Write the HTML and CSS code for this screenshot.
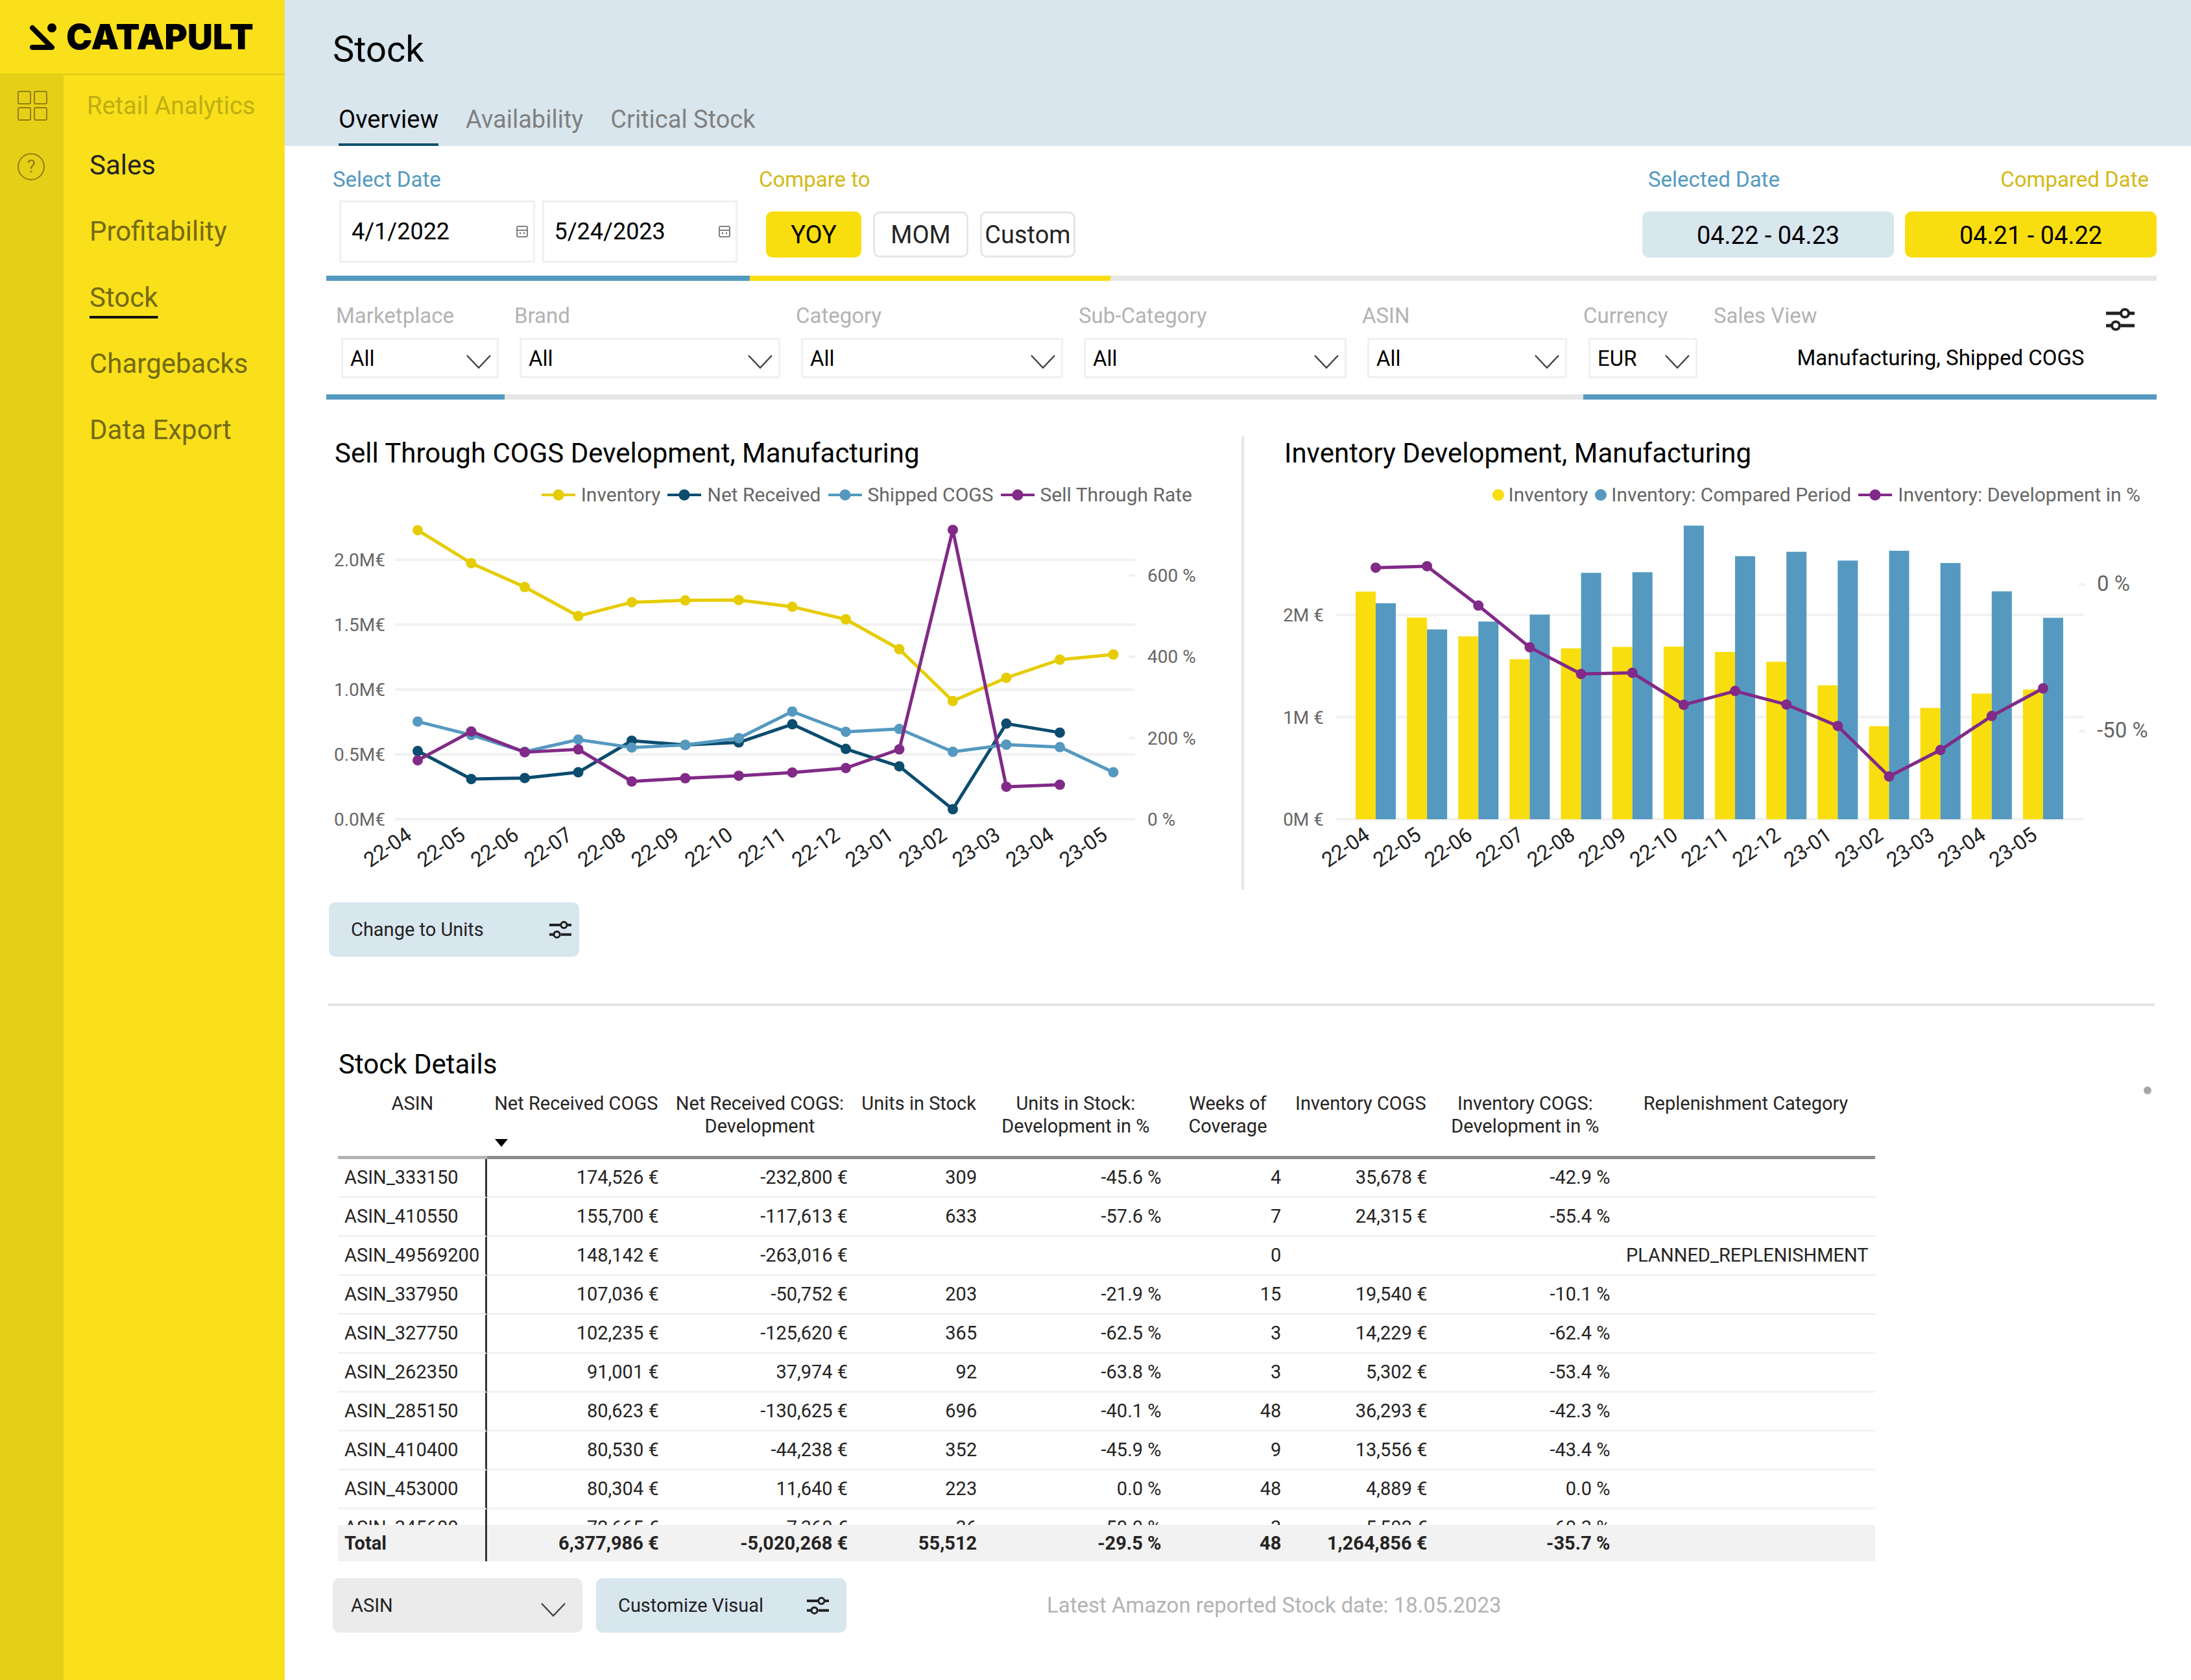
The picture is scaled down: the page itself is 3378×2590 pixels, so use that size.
FILE: index.html
```html
<!DOCTYPE html>
<html lang="en">
<head>
    <meta charset="UTF-8">
    <meta name="viewport" content="width=device-width, initial-scale=1.0">
    <title>Stock - Catapult</title>
    <link rel="stylesheet" href="styles.css">
</head>
<body>

    <svg width="0" height="0" class="sprite">
        <symbol id="sliders" viewBox="0 0 44 36">
            <path d="M0 9h22M36 9h8M0 28h8M23 28h21" stroke="currentColor" stroke-width="5" fill="none"/>
            <circle cx="29" cy="9" r="6" stroke="currentColor" stroke-width="4" fill="none"/>
            <circle cx="15" cy="28" r="6" stroke="currentColor" stroke-width="4" fill="none"/>
        </symbol>
        <symbol id="calendar" viewBox="0 0 18 18">
            <rect x="1" y="1" width="16" height="16" rx="2" stroke="currentColor" stroke-width="2" fill="none"/>
            <path d="M1 7h16M6 10v3M12 10v3" stroke="currentColor" stroke-width="2"/>
        </symbol>
    </svg>

    <aside class="sidebar">
        <div class="logo">
            <svg width="42" height="44" viewBox="0 0 42 44">
                <path d="M4 8L34 38H4" fill="none" stroke="#000" stroke-width="8" stroke-linecap="round" stroke-linejoin="round"/>
                <circle cx="34" cy="8" r="7" fill="#000"/>
            </svg>
            <span>CATAPULT</span>
        </div>
        <div class="sidebar-body">
            <div class="rail">
                <a href="#" aria-label="Apps">
                    <svg width="46" height="46" viewBox="0 0 46 46" fill="none" stroke="currentColor" stroke-width="2">
                        <rect x="1" y="1" width="19" height="19" rx="2"/>
                        <rect x="26" y="1" width="19" height="19" rx="2"/>
                        <rect x="1" y="26" width="19" height="19" rx="2"/>
                        <rect x="26" y="26" width="19" height="19" rx="2"/>
                    </svg>
                </a>
                <a href="#" class="help" aria-label="Help">?</a>
            </div>
            <nav class="nav">
                <p>Retail Analytics</p>
                <a href="#" class="dark">Sales</a>
                <a href="#">Profitability</a>
                <a href="#" class="current">Stock</a>
                <a href="#">Chargebacks</a>
                <a href="#">Data Export</a>
            </nav>
        </div>
    </aside>

    <main>
        <header class="page-header">
            <h1>Stock</h1>
            <nav class="tabs">
                <a href="#" class="active">Overview</a>
                <a href="#">Availability</a>
                <a href="#">Critical Stock</a>
            </nav>
        </header>

        <div class="content">
            <section class="dates">
                <div class="date-range">
                    <label for="from">Select Date</label>
                    <div class="date-inputs">
                        <div class="date-box">
                            <input type="text" id="from" value="4/1/2022">
                            <svg width="18" height="18"><use href="#calendar"/></svg>
                        </div>
                        <div class="date-box">
                            <input type="text" id="to" value="5/24/2023" aria-label="End date">
                            <svg width="18" height="18"><use href="#calendar"/></svg>
                        </div>
                    </div>
                </div>
                <div class="compare">
                    <span class="label">Compare to</span>
                    <div class="compare-buttons">
                        <button class="on">YOY</button>
                        <button>MOM</button>
                        <button>Custom</button>
                    </div>
                </div>
                <div class="periods">
                    <div class="period">
                        <span class="label">Selected Date</span>
                        <div class="pill">04.22 - 04.23</div>
                    </div>
                    <div class="period compared">
                        <span class="label">Compared Date</span>
                        <div class="pill">04.21 - 04.22</div>
                    </div>
                </div>
            </section>

            <section class="filters">
                <div class="filter blue">
                    <label for="marketplace">Marketplace</label>
                    <select id="marketplace"><option>All</option></select>
                </div>
                <div class="filter">
                    <label for="brand">Brand</label>
                    <select id="brand"><option>All</option></select>
                </div>
                <div class="filter">
                    <label for="category">Category</label>
                    <select id="category"><option>All</option></select>
                </div>
                <div class="filter">
                    <label for="subcategory">Sub-Category</label>
                    <select id="subcategory"><option>All</option></select>
                </div>
                <div class="filter wide-gap">
                    <label for="asin">ASIN</label>
                    <select id="asin"><option>All</option></select>
                </div>
                <div class="filter wide-gap flush blue">
                    <label for="currency">Currency</label>
                    <select id="currency"><option>EUR</option></select>
                </div>
                <div class="filter flush blue sales-view">
                    <div class="sales-view-head">
                        <span class="label">Sales View</span>
                        <button aria-label="Change sales view"><svg width="44" height="36"><use href="#sliders"/></svg></button>
                    </div>
                    <p>Manufacturing, Shipped COGS</p>
                </div>
            </section>

            <section class="charts">
                <div class="chart">
                    <h2>Sell Through COGS Development, Manufacturing</h2>
                    <ul class="legend">
                        <li><i class="line inv"></i>Inventory</li>
                        <li><i class="line net"></i>Net Received</li>
                        <li><i class="line ship"></i>Shipped COGS</li>
                        <li><i class="line rate"></i>Sell Through Rate</li>
                    </ul>
                    <svg id="sell-through" viewBox="0 0 1411 591"></svg>
                </div>
                <div class="chart inventory">
                    <h2>Inventory Development, Manufacturing</h2>
                    <ul class="legend">
                        <li><i class="dot yellow"></i>Inventory</li>
                        <li><i class="dot ship"></i>Inventory: Compared Period</li>
                        <li><i class="line rate"></i>Inventory: Development in %</li>
                    </ul>
                    <svg id="inventory-dev" viewBox="0 0 1394 591"></svg>
                </div>
            </section>

            <button class="action units">Change to Units <svg width="34" height="28"><use href="#sliders"/></svg></button>

            <hr>

            <section class="details">
                <h2>Stock Details</h2>
                <div class="details-row">
                    <div class="table-area">
                        <div class="table-scroll">
                            <table>
                                <colgroup>
                                    <col class="c-asin"><col class="c-net"><col class="c-netdev"><col class="c-units"><col class="c-unitsdev"><col class="c-weeks"><col class="c-inv"><col class="c-invdev"><col>
                                </colgroup>
                                <thead>
                                    <tr>
                                        <th>ASIN</th>
                                        <th class="sorted">Net Received COGS</th>
                                        <th>Net Received COGS: Development</th>
                                        <th>Units in Stock</th>
                                        <th>Units in Stock:<br>Development in %</th>
                                        <th>Weeks of Coverage</th>
                                        <th>Inventory COGS</th>
                                        <th>Inventory COGS:<br>Development in %</th>
                                        <th>Replenishment Category</th>
                                    </tr>
                                </thead>
                                <tbody>
                                    <tr><td>ASIN_333150</td><td>174,526 €</td><td>-232,800 €</td><td>309</td><td>-45.6 %</td><td>4</td><td>35,678 €</td><td>-42.9 %</td><td></td></tr>
                                    <tr><td>ASIN_410550</td><td>155,700 €</td><td>-117,613 €</td><td>633</td><td>-57.6 %</td><td>7</td><td>24,315 €</td><td>-55.4 %</td><td></td></tr>
                                    <tr><td>ASIN_49569200</td><td>148,142 €</td><td>-263,016 €</td><td></td><td></td><td>0</td><td></td><td></td><td>PLANNED_REPLENISHMENT</td></tr>
                                    <tr><td>ASIN_337950</td><td>107,036 €</td><td>-50,752 €</td><td>203</td><td>-21.9 %</td><td>15</td><td>19,540 €</td><td>-10.1 %</td><td></td></tr>
                                    <tr><td>ASIN_327750</td><td>102,235 €</td><td>-125,620 €</td><td>365</td><td>-62.5 %</td><td>3</td><td>14,229 €</td><td>-62.4 %</td><td></td></tr>
                                    <tr><td>ASIN_262350</td><td>91,001 €</td><td>37,974 €</td><td>92</td><td>-63.8 %</td><td>3</td><td>5,302 €</td><td>-53.4 %</td><td></td></tr>
                                    <tr><td>ASIN_285150</td><td>80,623 €</td><td>-130,625 €</td><td>696</td><td>-40.1 %</td><td>48</td><td>36,293 €</td><td>-42.3 %</td><td></td></tr>
                                    <tr><td>ASIN_410400</td><td>80,530 €</td><td>-44,238 €</td><td>352</td><td>-45.9 %</td><td>9</td><td>13,556 €</td><td>-43.4 %</td><td></td></tr>
                                    <tr><td>ASIN_453000</td><td>80,304 €</td><td>11,640 €</td><td>223</td><td>0.0 %</td><td>48</td><td>4,889 €</td><td>0.0 %</td><td></td></tr>
                                    <tr><td>ASIN_345600</td><td>72,665 €</td><td>7,360 €</td><td>36</td><td>-50.0 %</td><td>3</td><td>5,502 €</td><td>-60.3 %</td><td></td></tr>
                                </tbody>
                            </table>
                        </div>
                        <table class="totals">
                            <colgroup>
                                <col class="c-asin"><col class="c-net"><col class="c-netdev"><col class="c-units"><col class="c-unitsdev"><col class="c-weeks"><col class="c-inv"><col class="c-invdev"><col>
                            </colgroup>
                            <tr><td>Total</td><td>6,377,986 €</td><td>-5,020,268 €</td><td>55,512</td><td>-29.5 %</td><td>48</td><td>1,264,856 €</td><td>-35.7 %</td><td></td></tr>
                        </table>
                    </div>
                    <i class="more"></i>
                </div>
                <div class="details-footer">
                    <select class="group-by" aria-label="Group by"><option>ASIN</option></select>
                    <button class="action">Customize Visual <svg width="34" height="28"><use href="#sliders"/></svg></button>
                    <p>Latest Amazon reported Stock date: 18.05.2023</p>
                </div>
            </section>
        </div>
    </main>

    <script>
        const months = ["22-04", "22-05", "22-06", "22-07", "22-08", "22-09", "22-10", "22-11", "22-12", "23-01", "23-02", "23-03", "23-04", "23-05"];
        const inventory = [2.228, 1.974, 1.79, 1.566, 1.673, 1.687, 1.69, 1.638, 1.541, 1.311, 0.911, 1.09, 1.23, 1.27];
        const netReceived = [0.526, 0.31, 0.318, 0.362, 0.605, 0.573, 0.592, 0.732, 0.542, 0.408, 0.077, 0.737, 0.668];
        const shipped = [0.753, 0.649, 0.52, 0.614, 0.553, 0.573, 0.625, 0.83, 0.674, 0.696, 0.52, 0.575, 0.556, 0.362];
        const rate = [145, 216, 165, 172, 93, 101, 107, 115, 126, 172, 712, 80, 85];
        const compared = [2.114, 1.858, 1.935, 2.003, 2.412, 2.418, 2.874, 2.575, 2.618, 2.532, 2.628, 2.508, 2.231, 1.972];
        const development = [5.7, 6.2, -7.2, -21.4, -30.5, -30.1, -41, -36.3, -40.9, -48.2, -65.4, -56.4, -44.8, -35.4];

        const BASE = 482;

        function series(values, x, y, name) {
            const pts = values.map((v, i) => [x(i), y(v)]);
            return `<polyline class="s-${name}" points="${pts.join(" ")}"/>` +
                pts.map(p => `<circle class="d-${name}" cx="${p[0]}" cy="${p[1]}" r="8"/>`).join("");
        }

        function gridLine(x1, x2, y) {
            return `<line class="grid" x1="${x1}" x2="${x2}" y1="${y}" y2="${y}"/>`;
        }

        function axisText(x, y, text, cls) {
            return `<text class="axis ${cls}" x="${x}" y="${y + 10}">${text}</text>`;
        }

        function monthLabels(x) {
            return months.map((m, i) => `<text class="month" transform="translate(${x(i) - 7} 511) rotate(-35)">${m}</text>`).join("");
        }

        // sell through chart
        let x = i => 141 + i * 82.5;
        let y = v => BASE - v * 200;
        let yRate = v => BASE - v * 0.6265;
        let out = "";
        [0, 0.5, 1, 1.5, 2].forEach(v => out += gridLine(106, 1247, y(v)) + axisText(91, y(v), v.toFixed(1) + "M€", "left"));
        [0, 200, 400, 600].forEach(v => out += gridLine(1237, 1247, yRate(v)) + axisText(1266, yRate(v), v + " %", ""));
        out += monthLabels(x);
        out += series(inventory, x, y, "inv") + series(netReceived, x, y, "net") + series(shipped, x, y, "ship") + series(rate, x, yRate, "rate");
        document.getElementById("sell-through").innerHTML = out;

        // inventory chart
        x = i => 203 + i * 79.15;
        y = v => BASE - v * 157.5;
        let yDev = v => 120 - v * 4.527;
        out = "";
        [0, 1, 2].forEach(v => out += gridLine(141, 1295, y(v)) + axisText(123, y(v), v + "M €", "left"));
        [0, -50].forEach(v => out += gridLine(1287, 1297, yDev(v)) + axisText(1315, yDev(v), v + " %", "big"));
        out += monthLabels(x);
        months.forEach((m, i) => {
            out += `<rect class="bar-inv" x="${x(i) - 31}" y="${y(inventory[i])}" width="31" height="${BASE - y(inventory[i])}"/>`;
            out += `<rect class="bar-comp" x="${x(i)}" y="${y(compared[i])}" width="31" height="${BASE - y(compared[i])}"/>`;
        });
        out += series(development, x, yDev, "rate");
        document.getElementById("inventory-dev").innerHTML = out;
    </script>

</body>
</html>
```
FILE: styles.css
```css
* {
    box-sizing: border-box;
}
body {
    margin: 0;
    display: flex;
    min-height: 100vh;
    background-color: white;
    color: #000;
    font-family: Roboto, Arial, sans-serif;
    font-size: 33px;
    line-height: 40px;
}
h1, h2, p, ul {
    margin: 0;
    padding: 0;
    font-weight: 400;
}
a {
    color: inherit;
    text-decoration: none;
}
button, input, select {
    font-family: inherit;
    color: inherit;
    cursor: pointer;
}
.sprite {
    position: absolute;
}

/* sidebar */
.sidebar {
    width: 439px;
    flex-shrink: 0;
    display: flex;
    flex-direction: column;
    background-color: #f9e01b;
}
.logo {
    height: 116px;
    display: flex;
    align-items: center;
    gap: 14px;
    padding-left: 46px;
    border-bottom: 3px solid #e6cf17;
    font-family: Inter, sans-serif;
    font-size: 54px;
    font-weight: 900;
}
.sidebar-body {
    flex: 1;
    display: flex;
}
.rail {
    width: 98px;
    padding-top: 24px;
    padding-left: 27px;
    background-color: #e6cf17;
    color: #8f810f;
}
.rail a {
    display: block;
    height: 46px;
    margin-bottom: 50px;
}
.rail svg {
    display: block;
}
.rail .help {
    width: 42px;
    height: 42px;
    border: 2px solid #8f810f;
    border-radius: 50%;
    font-size: 28px;
    line-height: 38px;
    text-align: center;
}
.nav {
    display: flex;
    flex-direction: column;
    align-items: flex-start;
    gap: 52px;
    padding-top: 24px;
    padding-left: 40px;
    font-size: 42px;
    line-height: 50px;
    color: #746a10;
}
.nav p {
    margin-left: -4px;
    margin-bottom: -8px;
    font-size: 38px;
    line-height: 46px;
    color: #bfae12;
}
.nav .dark {
    color: #252423;
}
.nav .current {
    text-decoration: underline;
    text-decoration-color: #111;
    text-decoration-thickness: 4px;
    text-underline-offset: 14px;
}

/* header */
main {
    flex: 1;
    min-width: 0;
}
.page-header {
    height: 225px;
    display: flex;
    flex-direction: column;
    justify-content: space-between;
    padding-top: 44px;
    padding-left: 74px;
    background-color: #d9e6ee;
}
h1 {
    font-size: 56px;
    line-height: 64px;
}
.tabs {
    display: flex;
    gap: 42px;
    padding-left: 9px;
    font-size: 38px;
    line-height: 46px;
    color: #808080;
}
.tabs a {
    padding-bottom: 14px;
    border-bottom: 4px solid transparent;
}
.tabs .active {
    color: #000;
    border-color: #12506f;
}

.content {
    padding: 0 53px 40px 64px;
}
label, .label {
    display: block;
}

/* date row */
.dates {
    display: flex;
}
.date-range {
    width: 653px;
    padding: 32px 19px 20px 10px;
    border-bottom: 8px solid #5599c0;
}
.date-range label {
    color: #5599c0;
}
.date-inputs {
    display: flex;
    gap: 11px;
    margin-top: 12px;
    padding-left: 10px;
}
.date-box {
    flex: 1;
    min-width: 0;
    display: flex;
    align-items: center;
    height: 96px;
    padding-right: 8px;
    border: 3px solid #f0f0f0;
    color: #808080;
}
.date-box input {
    flex: 1;
    min-width: 0;
    height: 66px;
    padding: 0 0 0 16px;
    border: none;
    font-size: 36px;
    color: #000;
}
.date-box svg {
    flex-shrink: 0;
}
.compare {
    width: 556px;
    padding: 32px 0 0 14px;
    border-bottom: 8px solid #f9de0f;
}
.compare .label, .compared .label {
    color: #d4b915;
}
.compare-buttons {
    display: flex;
    gap: 18px;
    margin-top: 29px;
    padding-left: 11px;
}
.compare-buttons button {
    width: 147px;
    height: 71px;
    padding: 0;
    background-color: white;
    border: 3px solid #e6e6e6;
    border-radius: 10px;
    font-size: 38px;
    color: #252423;
}
.compare-buttons .on {
    background-color: #f9de0f;
    border-color: #f9de0f;
    color: #000;
}
.periods {
    flex: 1;
    display: flex;
    justify-content: flex-end;
    gap: 17px;
    padding-top: 32px;
    border-bottom: 8px solid #e6e6e6;
}
.period {
    width: 388px;
}
.period .label {
    padding: 0 12px 0 9px;
    color: #5599c0;
}
.compared .label {
    text-align: right;
    color: #d4b915;
}
.pill {
    height: 71px;
    margin-top: 29px;
    border-radius: 10px;
    background-color: #d8e6ee;
    font-size: 38px;
    line-height: 74px;
    text-align: center;
}
.compared .pill {
    background-color: #f9de0f;
}

/* filter row */
.filters {
    display: grid;
    grid-template-columns: 275fr 434fr 436fr 437fr 356fr 201fr 683fr;
}
.filter {
    padding: 34px 9px 25px 15px;
    border-bottom: 8px solid #e6e6e6;
    color: #b3b3b3;
}
.filter.blue {
    border-color: #5599c0;
}
.filter.wide-gap {
    padding-right: 25px;
}
.filter.flush {
    padding-left: 0;
}
select {
    appearance: none;
    border: none;
    background: white url("data:image/svg+xml,%3Csvg xmlns='http://www.w3.org/2000/svg' width='38' height='22'%3E%3Cpath d='M1 1l18 19L37 1' fill='none' stroke='%23444' stroke-width='2.5'/%3E%3C/svg%3E") no-repeat right 9px top 23px;
}
.filter select {
    display: block;
    width: calc(100% - 8px);
    height: 62px;
    margin-top: 14px;
    margin-left: 8px;
    padding: 0 0 0 11px;
    border: 3px solid #f0f0f0;
    font-size: 33px;
    color: #000;
}
.sales-view-head {
    display: flex;
    justify-content: space-between;
    padding-right: 25px;
}
.sales-view button {
    padding: 0;
    border: none;
    background: none;
    color: #222;
}
.sales-view svg {
    display: block;
    margin-top: 7px;
}
.sales-view p {
    margin-top: 22px;
    padding-left: 26px;
    text-align: center;
    color: #000;
}

/* charts */
.charts {
    display: grid;
    grid-template-columns: 1fr 1fr;
    padding-top: 56px;
}
.chart {
    min-width: 0;
}
.chart.inventory {
    padding-right: 13px;
    border-left: 4px solid #e6e6e6;
}
h2 {
    font-size: 42px;
    line-height: 50px;
}
.chart h2 {
    padding-top: 2px;
    padding-left: 13px;
}
.inventory h2 {
    padding-left: 62px;
}
.legend {
    display: flex;
    justify-content: flex-end;
    gap: 11px;
    margin-top: 21px;
    padding-right: 76px;
    list-style: none;
    font-size: 30px;
    line-height: 36px;
    color: #666;
}
.inventory .legend {
    padding-right: 12px;
}
.legend li {
    display: flex;
    align-items: center;
    gap: 9px;
}
.legend .line {
    width: 52px;
    height: 18px;
    background: radial-gradient(circle, currentColor 8px, transparent 9px), linear-gradient(currentColor, currentColor) center / 100% 4px no-repeat;
}
.legend .dot {
    width: 18px;
    height: 18px;
    margin-right: -2px;
    border-radius: 50%;
    background-color: currentColor;
}
.inv { color: #e6cc00; }
.net { color: #0b4c6f; }
.ship { color: #5599c0; }
.rate { color: #812a87; }
.yellow { color: #f9de0f; }

.chart > svg {
    display: block;
    width: 100%;
    height: auto;
}
.chart polyline {
    fill: none;
    stroke-width: 5;
    stroke-linejoin: round;
}
.s-inv { stroke: #e6cc00; }
.s-net { stroke: #0b4c6f; }
.s-ship { stroke: #5599c0; }
.s-rate { stroke: #812a87; }
.d-inv { fill: #e6cc00; }
.d-net { fill: #0b4c6f; }
.d-ship { fill: #5599c0; }
.d-rate { fill: #812a87; }
.bar-inv { fill: #f9de0f; }
.bar-comp { fill: #5599c0; }
.grid {
    stroke: #f2f2f2;
    stroke-width: 4;
}
.axis {
    font-size: 28px;
    fill: #666;
}
.axis.left {
    text-anchor: end;
}
.axis.big {
    font-size: 33px;
}
.month {
    font-size: 32px;
    fill: #222;
    text-anchor: end;
}

/* buttons under the visuals */
.action {
    display: flex;
    align-items: center;
    justify-content: space-between;
    width: 386px;
    height: 84px;
    padding: 0 27px 0 34px;
    border: none;
    border-radius: 10px;
    background-color: #d8e6ee;
    font-size: 29px;
    color: #222;
}
.action.units {
    margin: 19px 0 0 4px;
    padding-right: 12px;
}
hr {
    height: 4px;
    margin: 72px 3px 65px 3px;
    border: none;
    background-color: #e3e3e3;
}

/* stock details */
.details {
    padding-left: 10px;
}
.details h2 {
    padding-left: 9px;
}
.details-row {
    display: flex;
    justify-content: space-between;
    align-items: flex-start;
    padding: 9px 8px 0 8px;
}
.table-area {
    width: 85%;
    padding-right: 7px;
    margin-top: 9px;
}
.table-scroll {
    height: 667px;
    overflow: hidden;
}
table {
    width: 100%;
    table-layout: fixed;
    border-collapse: separate;
    border-spacing: 0;
    font-size: 29px;
    line-height: 35px;
    color: #252423;
}
.c-asin { width: 9.7%; }
.c-net { width: 11.6%; }
.c-netdev { width: 12.3%; }
.c-units { width: 8.4%; }
.c-unitsdev { width: 12%; }
.c-weeks { width: 7.8%; }
.c-inv { width: 9.5%; }
.c-invdev { width: 11.9%; }
th {
    height: 103px;
    padding: 0 6px;
    border-bottom: 5px solid #8c8c8c;
    font-weight: 400;
    vertical-align: top;
}
th:first-child {
    border-color: #b3b3b3;
}
.sorted::after {
    content: "";
    display: block;
    width: 0;
    margin-top: 37px;
    margin-left: 6px;
    border: 10px solid transparent;
    border-top: 12px solid #000;
    border-bottom: none;
}
td {
    height: 60px;
    padding: 0 10px;
    border-bottom: 3px solid #f2f2f2;
    text-align: right;
    white-space: nowrap;
}
td:first-child {
    border-right: 3px solid #333;
    text-align: left;
}
.totals td {
    height: 56px;
    border-bottom: none;
    background-color: #f2f2f2;
    font-weight: 700;
}
.more {
    width: 12px;
    height: 12px;
    border-radius: 50%;
    background-color: #a6a6a6;
}
.details-footer {
    display: flex;
    align-items: center;
    gap: 21px;
    margin-top: 26px;
}
.group-by {
    width: 385px;
    height: 84px;
    padding: 0 28px;
    border-radius: 10px;
    background-color: #ebebeb;
    background-position: right 26px top 38px;
    font-size: 29px;
    color: #222;
}
.details-footer p {
    margin-left: 288px;
    color: #b3b3b3;
}
```
